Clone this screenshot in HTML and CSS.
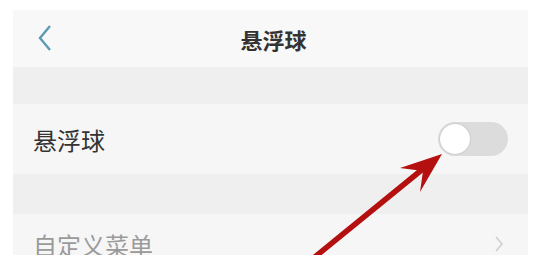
FILE: index.html
```html
<!DOCTYPE html>
<html>
	<head>
		<meta charset="UTF-8">
		<title>悬浮球</title>
		<link rel="stylesheet" href="styles.css">
	</head>
	<body>
		<div class="screen">
			<div class="topbar">
				<svg class="back" width="16" height="28" viewBox="0 0 16 28">
					<polyline points="13,2 3,14 13,26" fill="none" stroke="#5b9bb3" stroke-width="2.4" />
				</svg>
				<div class="title">悬浮球</div>
			</div>
			<div class="gap"></div>
			<div class="row">
				<span class="label">悬浮球</span>
				<span class="switch"><span class="knob"></span></span>
			</div>
			<div class="gap gap2"></div>
			<div class="row row-off">
				<span class="label">自定义菜单</span>
				<svg class="more" width="10" height="18" viewBox="0 0 10 18">
					<polyline points="2,2 8,9 2,16" fill="none" stroke="#cfcfcf" stroke-width="1.6" />
				</svg>
			</div>

			<!-- 红色箭头 -->
			<svg class="arrow" width="548" height="255" viewBox="0 0 548 255">
				<line x1="305" y1="265" x2="424" y2="168" stroke="#b3100f" stroke-width="5.5" stroke-linecap="round" />
				<polygon points="442,154 400,168 423,171 420,192" fill="#b3100f" />
			</svg>
		</div>
	</body>
</html>
```

FILE: styles.css
```css
* {
	margin: 0;
	padding: 0;
}

body {
	background: #fff;
	font-family: "Noto Sans CJK SC", "Liberation Sans", sans-serif;
	overflow: hidden;
}

.screen {
	width: 515px;
	margin: 10px 0 0 13px;
	height: 245px;
	overflow: hidden;
}

.topbar {
	height: 57px;
	background: #f8f8f8;
	display: flex;
	align-items: center;
	justify-content: center;
	position: relative;
}

.back {
	position: absolute;
	left: 24px;
	top: 14px;
}

.title {
	font-size: 22px;
	font-weight: bold;
	color: #333;
	margin-left: 6px;
}

.gap {
	height: 37px;
	background: #efefef;
}

.gap2 {
	height: 40px;
}

.row {
	height: 70px;
	background: #f6f6f6;
	display: flex;
	align-items: center;
	justify-content: space-between;
	padding: 0 20px 0 20px;
}

.label {
	font-size: 24px;
	color: #333;
}

.switch {
	width: 70px;
	height: 34px;
	border-radius: 17px;
	background: #dcdcdc;
	display: flex;
	align-items: center;
	padding-left: 2px;
	box-sizing: border-box;
}

.knob {
	width: 30px;
	height: 30px;
	border-radius: 50%;
	background: #fff;
	box-shadow: 0 0 2px rgba(0, 0, 0, 0.2);
}

.row-off {
	align-items: flex-start;
	padding-top: 13px;
}

.row-off .label {
	color: #9a9a9a;
}

.more {
	margin-top: 8px;
	margin-right: 4px;
}

.arrow {
	position: absolute;
	left: 0;
	top: 0;
}
```
